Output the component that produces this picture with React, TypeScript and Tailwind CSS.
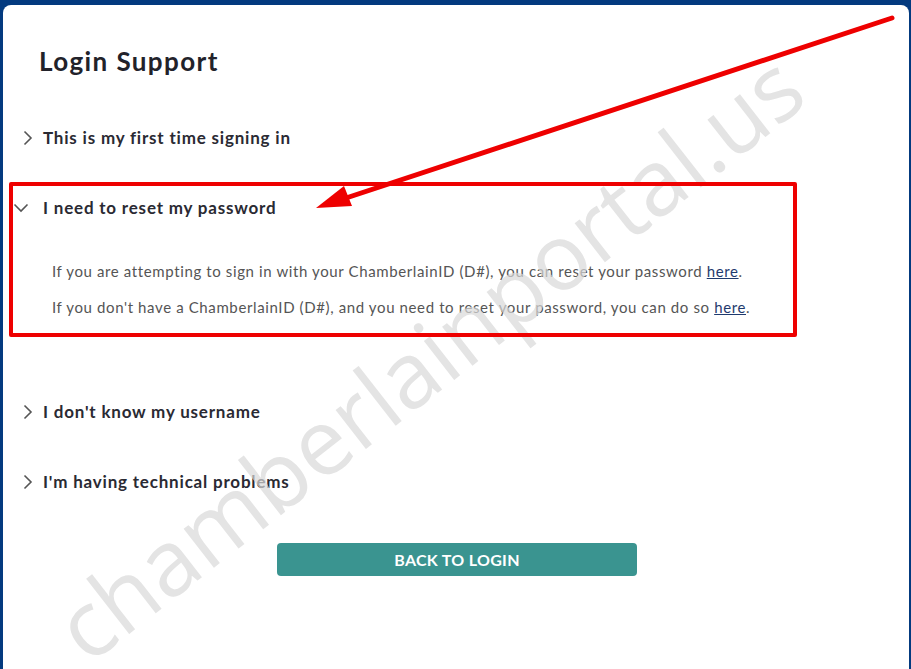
import React from "react";

const Chevron = ({ open }: { open?: boolean }) =>
  open ? (
    <svg width="16" height="10" viewBox="0 0 16 10" className="shrink-0">
      <polyline points="1.5,1.5 8,8 14.5,1.5" fill="none" stroke="#555" strokeWidth="1.6" />
    </svg>
  ) : (
    <svg width="10" height="16" viewBox="0 0 10 16" className="shrink-0">
      <polyline points="1.5,1.5 8,8 1.5,14.5" fill="none" stroke="#555" strokeWidth="1.6" />
    </svg>
  );

const Item = ({ title, open }: { title: string; open?: boolean }) => (
  <div className="flex h-[70px] items-center">
    <div className={open ? "flex w-[40px] justify-center pl-[1px] pr-[5px]" : "flex w-[40px] justify-start pl-[20px]"}>
      <Chevron open={open} />
    </div>
    <span className="text-[17px] font-bold tracking-[0.8px] text-[#2a2a33]">{title}</span>
  </div>
);

export default function App() {
  return (
    <div className="relative h-[669px] w-[911px] overflow-hidden bg-[#033a7f] pl-[3px] pr-[2px] pt-[5px] font-['Lato',sans-serif]">
      <div className="h-full rounded-t-[8px] bg-white">
        {/* Title */}
        <div className="pl-[36px] pt-[40px]">
          <h1 className="text-[26px] font-bold leading-[32px] tracking-[1.4px] text-[#22222a]">Login Support</h1>
        </div>

        {/* Accordion */}
        <div className="mt-[26px]">
          <Item title="This is my first time signing in" />
          <Item title="I need to reset my password" open />
          <div className="pl-[49px] text-[15px] leading-[36px] tracking-[0.62px] text-[#555]">
            <p className="mt-[10px]">
              If you are attempting to sign in with your ChamberlainID (D#), you can reset your password{" "}
              <a className="text-[#1f3a6e] underline">here</a>.
            </p>
            <p>
              If you don't have a ChamberlainID (D#), and you need to reset your password, you can do so{" "}
              <a className="text-[#1f3a6e] underline">here</a>.
            </p>
          </div>
          <div className="h-[52px]" />
          <Item title="I don't know my username" />
          <Item title="I'm having technical problems" />
        </div>

        {/* Button */}
        <div className="mt-[26px] pl-[274px]">
          <button className="h-[33px] w-[360px] rounded-[4px] bg-[#3a9490] text-[16px] font-bold tracking-[0.3px] text-white">
            BACK TO LOGIN
          </button>
        </div>
      </div>

      {/* Watermark */}
      <div className="pointer-events-none absolute left-[428px] top-[356px] -translate-x-1/2 -translate-y-1/2 rotate-[-38deg] whitespace-nowrap text-[92px] font-normal leading-none text-[#d9d9d9] opacity-70 font-['Open_Sans',sans-serif]">
        chamberlainportal.us
      </div>

      {/* Annotation box */}
      <div className="pointer-events-none absolute left-[9px] top-[182px] h-[155px] w-[788px] rounded-[2px] border-[4px] border-[#ee0000]" />

      {/* Annotation arrow */}
      <svg className="pointer-events-none absolute left-0 top-0" width="911" height="669">
        <line x1="892" y1="18" x2="340" y2="200" stroke="#ee0000" strokeWidth="5" strokeLinecap="round" />
        <polygon points="316,208 344,186 352,206" fill="#ee0000" />
      </svg>
    </div>
  );
}
